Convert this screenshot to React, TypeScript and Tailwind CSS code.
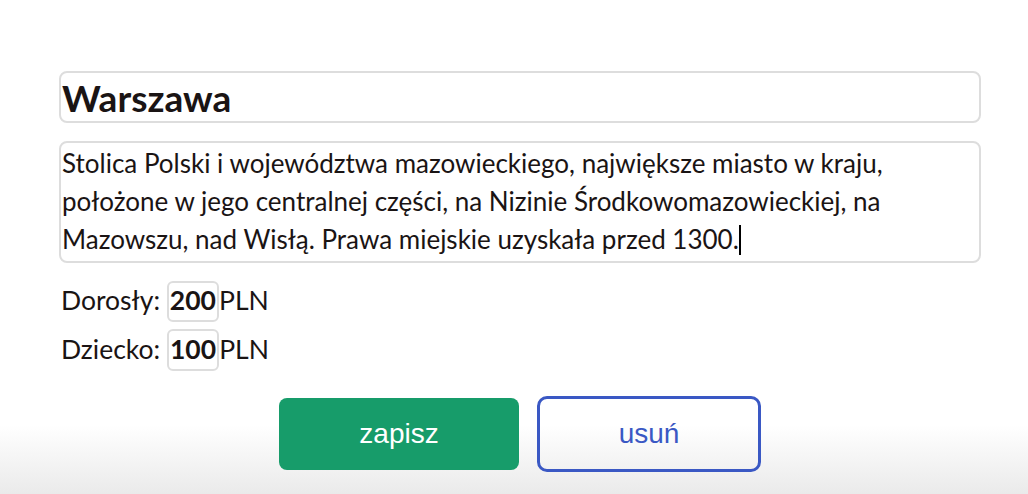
import React from "react";

export default function App() {
  const font = { fontFamily: "Lato, 'Noto Sans', sans-serif" };
  return (
    <div className="w-[1028px] h-[494px] overflow-hidden bg-[linear-gradient(to_bottom,#ffffff_0px,#ffffff_425px,#eaeaea_494px)]" style={font}>
      <div className="ml-[59px] w-[922px] pt-[71px] text-[#1a1414]">
        <div className="h-[52px] border-2 border-[#dddddd] rounded-[8px] flex items-center pl-[1px]">
          <span className="text-[37px] font-bold leading-none">Warszawa</span>
        </div>
        <div className="mt-[18px] h-[122px] border-2 border-[#dddddd] rounded-[8px] pl-[1px] pt-[1px] text-[26px] leading-[38px]">
          Stolica Polski i województwa mazowieckiego, największe miasto w kraju, położone w jego centralnej części, na Nizinie Środkowomazowieckiej, na Mazowszu, nad Wisłą. Prawa miejskie uzyskała przed 1300.
          <span className="inline-block w-[2px] h-[30px] bg-black align-[-6px]"></span>
        </div>
        <div className="mt-[16px] flex items-center text-[26.5px] h-[44px] pl-[2px]">
          <span>Dorosły:&nbsp;</span>
          <span className="border-2 border-[#dddddd] rounded-[6px] h-[41px] flex items-center px-[1px] font-bold">200</span>
          <span>PLN</span>
        </div>
        <div className="mt-[5px] flex items-center text-[26.5px] h-[44px] pl-[2px]">
          <span>Dziecko:&nbsp;</span>
          <span className="border-2 border-[#dddddd] rounded-[6px] h-[42px] flex items-center px-[1px] font-bold">100</span>
          <span>PLN</span>
        </div>
        <div className="mt-[24px] flex justify-center items-center gap-[18px]" style={{ fontFamily: "'Liberation Sans', Arial, sans-serif" }}>
          <button className="w-[240px] h-[72px] rounded-[8px] bg-[#179c6a] text-white text-[28px]">zapisz</button>
          <button className="w-[224px] h-[76px] rounded-[10px] border-[3px] border-[#3a58c4] text-[#3a58c4] text-[28px]">usuń</button>
        </div>
      </div>
    </div>
  );
}
